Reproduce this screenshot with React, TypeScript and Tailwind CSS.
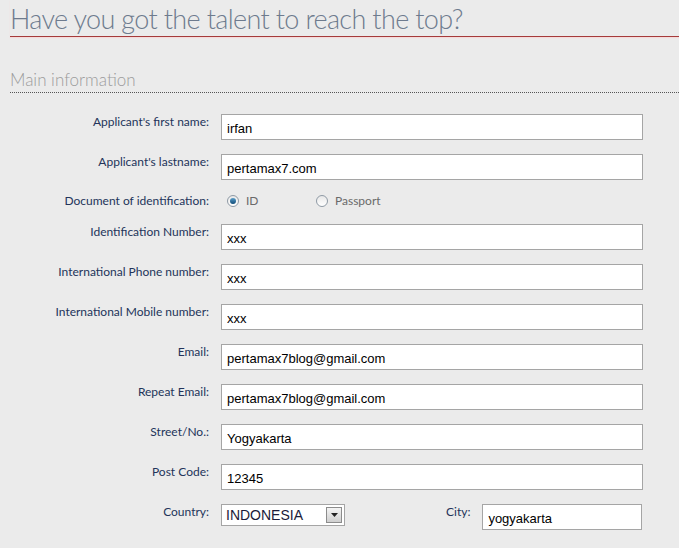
import React from 'react';

const labelCls = "w-[221px] shrink-0 pr-[12px] text-right text-[12px] leading-[14px] text-[#23345a] font-['Lato',sans-serif]";
const inputCls = "h-[26px] border border-[#a5a5a5] bg-white px-[5px] pt-[2px] text-[13px] text-black font-['Liberation_Sans',Arial,sans-serif] outline-none";

const Row: React.FC<{ label: string; value: string }> = ({ label, value }) => (
  <div className="flex items-start">
    <div className={`${labelCls} pt-[1px]`}>{label}</div>
    <input className={`${inputCls} w-[422px]`} defaultValue={value} />
  </div>
);

const Radio: React.FC<{ checked?: boolean }> = ({ checked }) => (
  <span className="flex h-[12px] w-[12px] items-center justify-center rounded-full border border-[#8f9aa5] bg-gradient-to-b from-[#e8e8e8] to-white">
    {checked && <span className="h-[6px] w-[6px] rounded-full bg-gradient-to-b from-[#5a9ec9] to-[#0d4c78]" />}
  </span>
);

const App: React.FC = () => {
  return (
    <div className="min-h-[548px] w-[679px] overflow-hidden bg-[#ebebeb] pl-[10px]">
      <h1 className="border-b border-[#a53b3b] pb-[2px] pt-[3px] text-[27px] font-light leading-[31px] tracking-[-0.65px] text-[#6e7b8e] font-['Lato',sans-serif] shadow-[0_1px_1px_#f5dada]">
        Have you got the talent to reach the top?
      </h1>
      <h2 className="mt-[33px] border-b border-dotted border-[#555] pb-[2px] text-[17px] font-light leading-[20px] text-[#9c9c9c] font-['Lato',sans-serif]">
        Main information
      </h2>

      <div className="ml-[-10px] mt-[21px] flex flex-col gap-[14px]">
        <Row label="Applicant's first name:" value="irfan" />
        <Row label="Applicant's lastname:" value="pertamax7.com" />
        <div className="flex h-[16px] items-start">
          <div className={`${labelCls}`}>Document of identification:</div>
          <div className="flex items-center text-[12px] leading-[14px] text-[#6a6a6a] font-['Lato',sans-serif]">
            <span className="ml-[6px]"><Radio checked /></span>
            <span className="ml-[7px] w-[70px]">ID</span>
            <Radio />
            <span className="ml-[7px]">Passport</span>
          </div>
        </div>
        <Row label="Identification Number:" value="xxx" />
        <Row label="International Phone number:" value="xxx" />
        <Row label="International Mobile number:" value="xxx" />
        <Row label="Email:" value="pertamax7blog@gmail.com" />
        <Row label="Repeat Email:" value="pertamax7blog@gmail.com" />
        <Row label="Street/No.:" value="Yogyakarta" />
        <Row label="Post Code:" value="12345" />
        <div className="flex items-start">
          <div className={`${labelCls} pt-[1px]`}>Country:</div>
          <div className="flex h-[22px] w-[124px] items-center justify-between border border-[#a5a5a5] bg-white pl-[4px] pr-[2px]">
            <span className="text-[14px] text-[#1a1a3a] font-['Liberation_Sans',Arial,sans-serif]">INDONESIA</span>
            <span className="flex h-[16px] w-[16px] items-center justify-center border border-[#8c8c8c] bg-gradient-to-b from-[#f4f4f4] to-[#cfcfcf]">
              <svg width="7" height="4" viewBox="0 0 7 4"><path d="M0 0h7L3.5 4z" fill="#222" /></svg>
            </span>
          </div>
          <div className="ml-[101px] pt-[1px] text-[12px] leading-[14px] text-[#23345a] font-['Lato',sans-serif]">City:</div>
          <input className={`${inputCls} ml-[12px] w-[160px]`} defaultValue="yogyakarta" />
        </div>
      </div>
    </div>
  );
};

export default App;
